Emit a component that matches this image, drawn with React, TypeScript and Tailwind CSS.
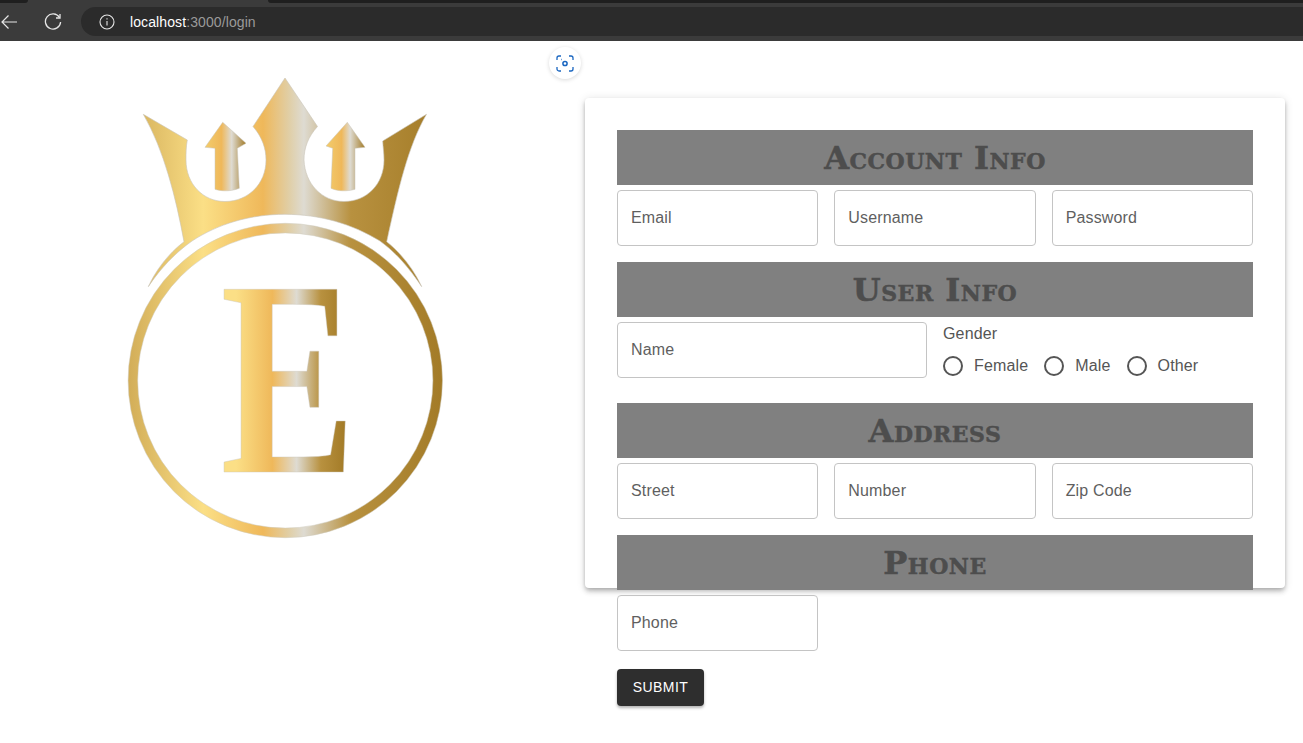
import React from "react";

function Logo() {
  return (
    <svg width="330" height="475" viewBox="120 70 330 475" className="block">
      <defs>
        <linearGradient id="gold" gradientUnits="userSpaceOnUse" x1="128" y1="0" x2="442" y2="0">
          <stop offset="0" stopColor="#d2ad58" />
          <stop offset="0.24" stopColor="#fbdf86" />
          <stop offset="0.43" stopColor="#efb85a" />
          <stop offset="0.515" stopColor="#e0cfa8" />
          <stop offset="0.56" stopColor="#dedbd2" />
          <stop offset="0.71" stopColor="#b8913f" />
          <stop offset="1" stopColor="#a37b27" />
        </linearGradient>
        <linearGradient id="goldE" gradientUnits="userSpaceOnUse" x1="224" y1="0" x2="345" y2="0">
          <stop offset="0.1" stopColor="#fbdf86" />
          <stop offset="0.4" stopColor="#efb85a" />
          <stop offset="0.6" stopColor="#dedbd2" />
          <stop offset="0.8" stopColor="#b8913f" />
          <stop offset="1" stopColor="#a37b27" />
        </linearGradient>
        <linearGradient id="goldL" gradientUnits="userSpaceOnUse" x1="205" y1="0" x2="246" y2="0">
          <stop offset="0" stopColor="#f3cc6c" />
          <stop offset="0.4" stopColor="#efb85a" />
          <stop offset="0.65" stopColor="#dedbd2" />
          <stop offset="1" stopColor="#a37b27" />
        </linearGradient>
        <linearGradient id="goldR" gradientUnits="userSpaceOnUse" x1="326" y1="0" x2="365" y2="0">
          <stop offset="0" stopColor="#f3cc6c" />
          <stop offset="0.4" stopColor="#efb85a" />
          <stop offset="0.62" stopColor="#dedbd2" />
          <stop offset="1" stopColor="#a37b27" />
        </linearGradient>
      </defs>
      {/* crown */}
      <path
        fill="url(#gold)"
        stroke="#c9c4b8"
        strokeWidth="0.6"
        d="M285 78 L317.5 126.5 C308 137 304 148 304 160 C305 184 322 201.5 344 201.5 C367 201.5 384 184 384 160 C384 153 383 147 382.7 141 L426.5 114.3 C408 146 398 190 386.7 241.7 C402 254 414 270 421.7 286.7 C408 266 395 252 380 241 C352 224 320 214.3 285 214.3 C250 214.3 218 224 192 241 C175 253 160 269 148.3 286.7 C156 270 168 254 184 241.7 C176 198 164 150 143.3 114.3 L187.3 140 C186 147 186 153 186 160 C186 184 203 201.5 225 201.5 C248 201.5 266 184 266 160 C266 148 262 137 253 126.5 Z"
      />
      <path
        fill="url(#goldL)"
        stroke="#c9c4b8"
        strokeWidth="0.5"
        d="M222.7 122.3 L246 143.3 L237.3 148.3 L239.3 188.3 C231 191.5 222 191.5 215 189.3 L215 148.3 L205 147.3 Z"
      />
      <path
        fill="url(#goldR)"
        stroke="#c9c4b8"
        strokeWidth="0.5"
        d="M347.3 122.3 L365 147.3 L355 148.3 L355 189.3 C347 191.5 338 191.5 331 188.3 L332.7 148.3 L326 146 Z"
      />
      {/* ring */}
      <circle cx="285.3" cy="380.5" r="152.4" fill="none" stroke="url(#gold)" strokeWidth="9.6" />
      <circle cx="285.3" cy="380.5" r="157.2" fill="none" stroke="#cfcabd" strokeWidth="0.5" />
      <circle cx="285.3" cy="380.5" r="147.6" fill="none" stroke="#cfcabd" strokeWidth="0.5" />
      <text
        x="220.6"
        y="472"
        fill="url(#goldE)"
        stroke="#c9c4b8"
        strokeWidth="0.5"
        fontSize="279"
        fontWeight="700"
        textLength="135"
        lengthAdjust="spacingAndGlyphs"
        className="font-['Liberation_Serif',serif]"
      >
        E
      </text>
    </svg>
  );
}

function Field({ label }: { label: string }) {
  return (
    <div className="h-14 rounded border border-[#c4c4c4] flex items-center px-[13px] text-base tracking-[0.15px] text-[#5f5f5f]">
      {label}
    </div>
  );
}

function SectionTitle({ title }: { title: string }) {
  return (
    <h2 className="h-[55px] bg-[#808080] flex items-center justify-center font-['DejaVu_Serif',serif] font-bold text-[32px] [font-variant:small-caps] [-webkit-text-stroke:0.5px_#4d4d4d] text-[#4d4d4d] tracking-[0.5px]">
      {title}
    </h2>
  );
}

function Radio({ label }: { label: string }) {
  return (
    <label className="flex items-center gap-[11px]">
      <span className="w-5 h-5 rounded-full border-2 border-[#555]" />
      <span>{label}</span>
    </label>
  );
}

export default function App() {
  return (
    <div className="min-h-[743px] bg-white font-['Liberation_Sans',Arial,sans-serif] overflow-hidden">
      {/* browser toolbar */}
      <div className="h-[41px] bg-[#3b3b3b] relative flex items-center pt-[2px]">
        <div className="absolute top-0 left-0 w-[28px] h-[3px] bg-[#1f1f1f] rounded-br" />
        <div className="absolute top-0 left-[268px] right-0 h-[3px] bg-[#1f1f1f] rounded-bl" />
        <svg width="18" height="16" viewBox="0 0 18 16" className="ml-0 shrink-0" fill="none" stroke="#e6e6e6" strokeWidth="1.2">
          <path d="M17 8H2M8.5 1.5 2 8l6.5 6.5" />
        </svg>
        <svg width="18" height="18" viewBox="0 0 18 18" className="ml-[26px] shrink-0" fill="none" stroke="#e6e6e6" strokeWidth="1.3">
          <path d="M15.5 4.5A7.6 7.6 0 1 0 16.6 9" />
          <path d="M16 1v4h-4" />
        </svg>
        <div className="ml-[19px] flex-1 h-[29px] bg-[#2b2b2b] rounded-l-full flex items-center pl-[18px] text-sm tracking-[0.1px]">
          <svg width="16" height="16" viewBox="0 0 16 16" fill="none" stroke="#e6e6e6" strokeWidth="1.1">
            <circle cx="8" cy="8" r="7" />
            <path d="M8 7v4.5M8 4.2v1.3" />
          </svg>
          <span className="ml-[15px] text-white">localhost</span>
          <span className="text-[#9a9a9a]">:3000/login</span>
        </div>
      </div>

      <div className="relative flex">
        {/* lens button */}
        <div className="absolute left-[549px] top-[6px] w-8 h-8 rounded-full bg-white shadow-[0_1px_4px_rgba(0,0,0,0.15)] flex items-center justify-center">
          <svg width="18" height="17" viewBox="0 0 18 17" fill="none" stroke="#1a66c0" strokeWidth="1.3">
            <path d="M1 5V3a2 2 0 0 1 2-2h2M13 1h2a2 2 0 0 1 2 2v2M17 12v2a2 2 0 0 1-2 2h-2M5 16H3a2 2 0 0 1-2-2v-2" />
            <circle cx="9" cy="8.5" r="2.1" strokeWidth="1.5" />
            <path d="M5 4.5h.6" />
          </svg>
        </div>

        <div className="w-[585px] shrink-0 pl-[120px] pt-[29px]">
          <Logo />
        </div>

        {/* card */}
        <div className="mt-[57px] w-[700px] h-[490px] bg-white rounded shadow-[0_2px_4px_-1px_rgba(0,0,0,0.2),0_4px_5px_0_rgba(0,0,0,0.14),0_1px_10px_0_rgba(0,0,0,0.12)] p-8">
          <SectionTitle title="Account Info" />
          <div className="grid grid-cols-3 gap-4 mt-[5px] mb-4">
            <Field label="Email" />
            <Field label="Username" />
            <Field label="Password" />
          </div>

          <SectionTitle title="User Info" />
          <div className="grid grid-cols-2 gap-4 mt-[5px] mb-4 h-[65px]">
            <Field label="Name" />
            <div className="text-[#555] tracking-[0.15px]">
              <div className="leading-6">Gender</div>
              <div className="flex items-center gap-[16px] mt-[8px]">
                <Radio label="Female" />
                <Radio label="Male" />
                <Radio label="Other" />
              </div>
            </div>
          </div>

          <SectionTitle title="Address" />
          <div className="grid grid-cols-3 gap-4 mt-[5px] mb-4">
            <Field label="Street" />
            <Field label="Number" />
            <Field label="Zip Code" />
          </div>

          <SectionTitle title="Phone" />
          <div className="grid grid-cols-3 gap-4 mt-[5px] mb-[18px]">
            <Field label="Phone" />
          </div>

          <button className="h-[37px] w-[87px] pb-[2px] rounded bg-[#2e2e2e] text-white text-sm tracking-[0.4px] shadow-[0_2px_3px_rgba(0,0,0,0.3)]">
            SUBMIT
          </button>
        </div>
      </div>
    </div>
  );
}
